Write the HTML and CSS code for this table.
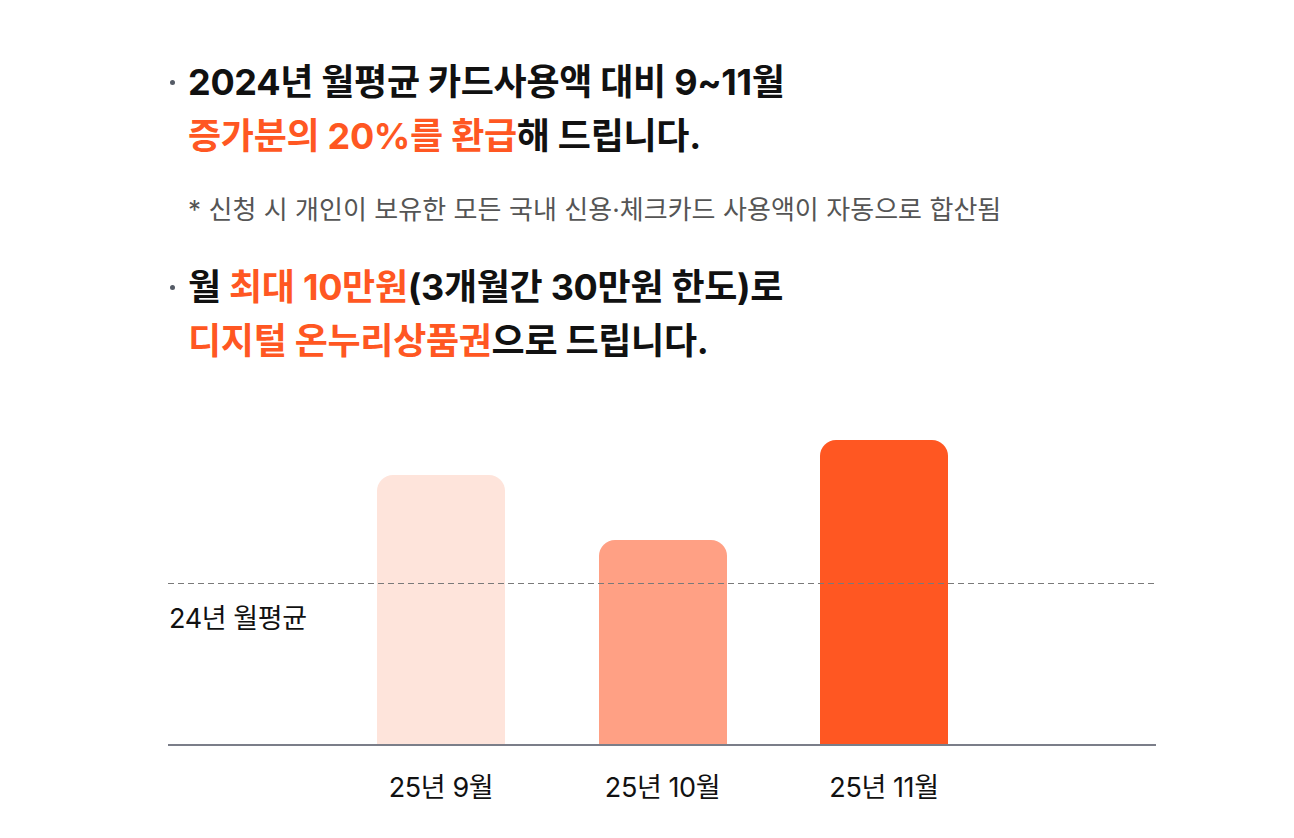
FILE: index.html
```html
<!DOCTYPE html>
<html lang="ko">
<head>
<meta charset="utf-8">
<link rel="stylesheet" href="styles.css">
</head>
<body>
<main class="page">
  <section class="point">
    <p class="headline"><span class="dot"></span>2024년 월평균 카드사용액 대비 9~11월<br><em>증가분의 20%를 환급</em>해 드립니다.</p>
    <p class="note">* 신청 시 개인이 보유한 모든 국내 신용·체크카드 사용액이 자동으로 합산됨</p>
  </section>
  <section class="point point-second">
    <p class="headline"><span class="dot"></span>월 <em>최대 10만원</em>(3개월간 30만원 한도)로<br><em>디지털 온누리상품권</em>으로 드립니다.</p>
  </section>
  <section class="chart">
    <div class="plot">
      <div class="bars">
        <div class="bar bar-1" style="height:269px"></div>
        <div class="bar bar-2" style="height:204px"></div>
        <div class="bar bar-3" style="height:304px"></div>
      </div>
      <div class="avg-line"></div>
      <div class="avg-label">24년 월평균</div>
    </div>
    <div class="labels">
      <span class="label">25년 9월</span>
      <span class="label">25년 10월</span>
      <span class="label">25년 11월</span>
    </div>
  </section>
</main>
</body>
</html>
```
FILE: styles.css
```css
* { box-sizing: border-box; }
html, body { margin: 0; padding: 0; background: #fff; }
body {
  font-family: Inter, "Noto Sans CJK KR", sans-serif;
  color: #111;
}
.page {
  width: 1294px;
  padding: 55px 0 0 168px;
}
.point p { margin: 0; }
.headline {
  position: relative;
  padding-left: 20px;
  font-size: 36px;
  font-weight: 700;
  line-height: 54px;
  letter-spacing: -0.3px;
  color: #111;
}
.headline em {
  font-style: normal;
  color: #ff5722;
}
.dot {
  position: absolute;
  left: 2px;
  top: 25px;
  width: 5px;
  height: 5px;
  border-radius: 50%;
  background: #555b66;
}
.point .note {
  margin-top: 29px;
  padding-left: 20px;
  font-size: 26px;
  line-height: 36px;
  color: #555;
  letter-spacing: 0.05px;
}
.point-second { margin-top: 32px; }
.chart {
  width: 988px;
  margin-top: 52px;
}
.plot {
  position: relative;
  height: 326px;
  border-bottom: 2px solid #7b7e89;
}
.bars {
  display: flex;
  align-items: flex-end;
  height: 100%;
  padding-left: 209px;
  gap: 93.5px;
}
.bar {
  width: 128px;
  border-radius: 16px 16px 0 0;
}
.bar-1 { background: #fee4db; }
.bar-2 { background: #ffa084; }
.bar-3 { background: #ff5722; }
.avg-line {
  position: absolute;
  left: 0;
  right: 0;
  top: 163px;
  height: 1px;
  background: repeating-linear-gradient(to right, #7a7a7a 0 6px, transparent 6px 10px);
}
.avg-label {
  position: absolute;
  left: 1px;
  top: 181px;
  font-size: 27px;
  line-height: 36px;
  color: #111;
  letter-spacing: -0.4px;
}
.labels {
  display: flex;
  padding-left: 209px;
  gap: 93.5px;
  padding-top: 24px;
}
.label {
  width: 128px;
  text-align: center;
  font-size: 27px;
  line-height: 36px;
  color: #111;
  letter-spacing: -0.4px;
}
```
